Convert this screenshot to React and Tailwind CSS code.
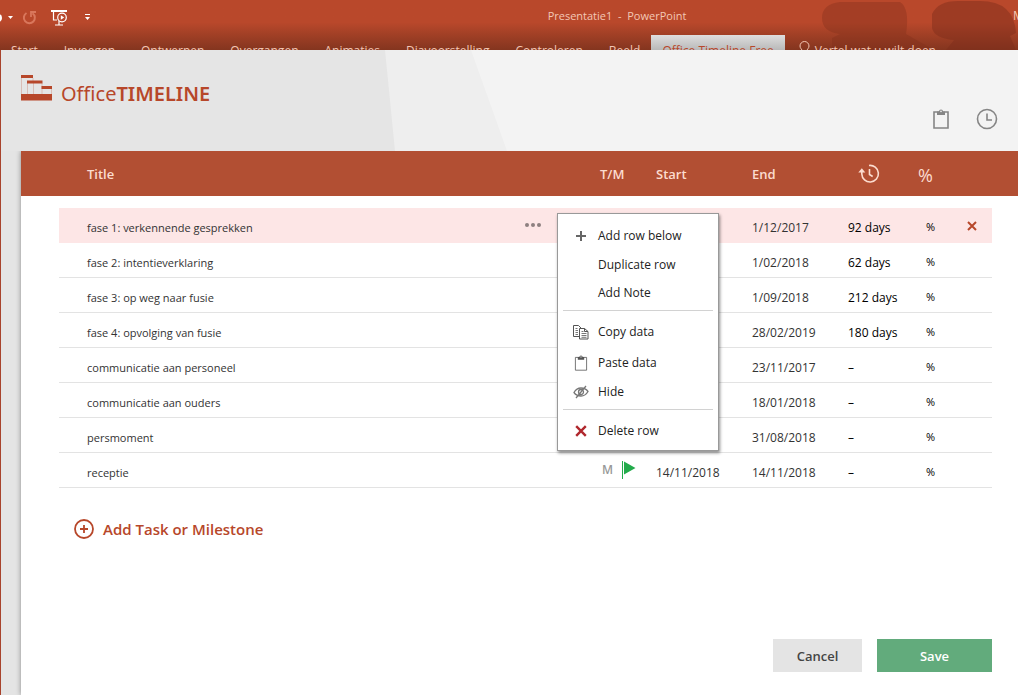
import { useState } from "react";
import clsx from "clsx";

const tabs = ["Start", "Invoegen", "Ontwerpen", "Overgangen", "Animaties", "Diavoorstelling", "Controleren", "Beeld"];

const rows = [
  { title: "fase 1: verkennende gesprekken", end: "1/12/2017", duration: "92 days" },
  { title: "fase 2: intentieverklaring", end: "1/02/2018", duration: "62 days" },
  { title: "fase 3: op weg naar fusie", end: "1/09/2018", duration: "212 days" },
  { title: "fase 4: opvolging van fusie", end: "28/02/2019", duration: "180 days" },
  { title: "communicatie aan personeel", end: "23/11/2017" },
  { title: "communicatie aan ouders", end: "18/01/2018" },
  { title: "persmoment", end: "31/08/2018" },
  { title: "receptie", milestone: true, start: "14/11/2018", end: "14/11/2018" },
];

const ClipboardIcon = ({ className, strokeWidth = 1 }) => (
  <svg viewBox="0 0 16 20" className={className} fill="none" stroke="currentColor" strokeWidth={strokeWidth}>
    <path d="M1 3h14v16H1z" />
    <path d="M4 2.5h2a2 2 0 0 1 4 0h2V6H4z" fill="currentColor" stroke="none" />
    <circle cx="8" cy="2.4" r="0.8" fill="#f3f3f3" stroke="none" />
  </svg>
);

const ClockIcon = () => (
  <svg viewBox="0 0 22 22" className="size-[22px]" fill="none" stroke="currentColor" strokeWidth="1.6">
    <circle cx="11" cy="11" r="9.5" />
    <path d="M11 5.5V12h5" />
  </svg>
);

const HistoryIcon = () => (
  <svg viewBox="0 0 22 20" className="h-5 w-[22px]" fill="none" stroke="currentColor" strokeWidth="1.6">
    <path d="M11 1.5a8.3 8.3 0 1 1-7.2 8.5V7" />
    <path d="M.3 8.5 3.8 4.3l3.5 4.2z" fill="currentColor" stroke="none" />
    <path d="M11.5 5v5.5l3.2 2" />
  </svg>
);

const CopyIcon = () => (
  <svg viewBox="0 0 16 15" className="h-[15px] w-4" fill="none" stroke="currentColor">
    <path d="M6 11.5H.5V.5h5L8 3v1" />
    <path d="M2.5 3.5h2M2.5 5.5H5M2.5 7.5H5M2.5 9.5H5" strokeWidth=".8" />
    <path d="M6.5 3.5h5l3.5 3V14H6.5zM11.5 3.5v3H15" />
    <path d="M8.5 6.5h2M8.5 8.5h5M8.5 10.5h5M8.5 12.3h5" strokeWidth=".8" />
  </svg>
);

const HiddenIcon = () => (
  <svg viewBox="0 0 16 14" className="h-[14px] w-4" fill="none" stroke="#777" strokeWidth="1.3">
    <path d="M1 7.5C3 4 6 3 8 3s5 .8 7 3.5C13 10 10 11 8 11S3 10.3 1 7.5z" />
    <path d="M5.5 7a2.5 2.5 0 1 0 5 0 2.500 2.500 0 1 0-5 0M3 13 13 1" />
  </svg>
);

const CrossIcon = ({ className }) => (
  <svg viewBox="0 0 12 12" className={className} fill="none" stroke="currentColor" strokeWidth="2.4">
    <path d="m1.200 1.200 9.600 9.600M10.800 1.200 1.200 10.800" />
  </svg>
);

const PlusIcon = () => (
  <svg viewBox="0 0 12 12" className="size-3" fill="none" stroke="#666" strokeWidth="2">
    <path d="M6 1v10M1 6h10" />
  </svg>
);

const FlagIcon = () => (
  <svg viewBox="0 0 14 18" className="h-[18px] w-[14px]" fill="#22ab4b">
    <path d="M0 0h1v18H0zM2 .5 13.5 7 2 13.5z" />
  </svg>
);

const Logo = () => (
  <div className="flex items-start text-[#b7472a]">
    <svg viewBox="0 0 31 28" className="mr-[9px] h-7 w-[31px]" fill="currentColor">
      <path d="M0 1h12v3H0zM6 6.5h15.5v3H6zM20.5 12H31v3H20.5zM0 20h31v6.5H0z" />
      <path d="M0 4h1v16H0zM6 9h1v11H6zM11.5 4h1v3h-1zM12 9h1v11h-1zM20.5 9h1v11h-1zM30 14h1v6h-1z" opacity=".25" />
    </svg>
    <span className="pt-[6px] font-['Noto_Sans'] text-xl leading-7">
      Office<span className="font-semibold">TIMELINE</span>
    </span>
  </div>
);

function Ribbon() {
  return (
    <div className="relative h-[50px] shrink-0 overflow-hidden bg-linear-to-b from-[#b9482b] from-45% to-[#84351f] text-xs text-[#f3c7b5]">
      <svg className="absolute top-0 right-0 h-[50px] w-[200px]" viewBox="0 0 200 50" fill="#7d2d1a">
        <path d="M22 2h60q10 6 6 32l28 16H14V38l8-4Q4 32 4 18T22 2z" opacity=".35" />
        <path d="M114 14Q120 1 140 1h22q34 0 36 32l-6 3 6 14h-70l8-10q-20-2-22-12z" opacity=".45" />
      </svg>
      <div className="relative flex h-[35px] items-center">
        <button className="flex w-[22px] items-center" aria-label="Ongedaan maken">
          <svg viewBox="0 0 14 10" className="h-[10px] w-[14px]" fill="#fff">
            <circle cx="-2" cy="5" r="4" />
            <path d="M8 3h5l-2.5 3z" />
          </svg>
        </button>
        <button className="text-[#d9775c]" aria-label="Opnieuw">
          <svg viewBox="0 0 15 15" className="size-[15px]" fill="none" stroke="currentColor" strokeWidth="2">
            <path d="M4.500 3A5.500 5.500 0 1 0 10.500 3.200" />
            <path d="M14 2H9v5" strokeWidth="1.8" />
          </svg>
        </button>
        <button className="ml-[14px] text-white" aria-label="Voorstelling starten">
          <svg viewBox="0 0 17 16" className="h-4 w-[17px]" fill="none" stroke="currentColor" strokeWidth="1.2">
            <path d="M0 1h16" strokeWidth="2" />
            <path d="M2.5 1v9H6M8 11v4M4 15h8" />
            <circle cx="11" cy="7.5" r="4.3" />
            <path d="m9.800 5.300 3.400 2.200-3.400 2.200z" fill="currentColor" stroke="none" />
          </svg>
        </button>
        <button className="ml-4 text-white" aria-label="Werkbalk aanpassen">
          <svg viewBox="0 0 7 7" className="size-[7px]" fill="currentColor">
            <path d="M1 0h5v1H1zM1 3h5L3.500 6z" />
          </svg>
        </button>
        <span className="flex-1 pb-[3px] pl-[130px] text-center text-[11px] whitespace-pre">Presentatie1  -  PowerPoint</span>
        <span className="w-[5px] overflow-hidden pb-[3px]">M</span>
      </div>
      <div className="relative flex h-7 pl-[11px] whitespace-nowrap">
        {tabs.map((tab) => (
          <button key={tab} className="mr-[26px] leading-8">
            {tab}
          </button>
        ))}
        <button className="-ml-[15px] bg-linear-to-b from-[#dedede] to-[#9a9a9a] px-[11px] leading-8 text-[#b7472a]">
          Office Timeline Free
        </button>
        <button className="ml-[14px] flex gap-[5px] leading-8">
          <svg viewBox="0 0 11 16" className="mt-[6px] h-4 w-[11px]" fill="none" stroke="currentColor">
            <path d="M3.5 10.5C3 8 1 7.500 1 5a4.500 4.500 0 0 1 9 0c0 2.500-2 3-2.500 5.500z" />
          </svg>
          Vertel wat u wilt doen
        </button>
      </div>
    </div>
  );
}

const MenuItem = ({ icon, label, className }) => (
  <button role="menuitem" className={clsx("flex w-full items-center text-left text-xs text-[#222]", className)}>
    <span className="mr-2 ml-[14px] flex w-[18px] justify-center text-[#555]">{icon}</span>
    {label}
  </button>
);

const RowMenu = () => (
  <div
    role="menu"
    className="absolute top-[5px] left-full z-10 -ml-[15px] w-[162px] border border-[#999] bg-white pt-2 pb-[5px] shadow-[1px_2px_3px_rgba(0,0,0,0.45)]"
  >
    <MenuItem className="h-7" icon={<PlusIcon />} label="Add row below" />
    <MenuItem className="h-[29px]" label="Duplicate row" />
    <MenuItem className="h-7" label="Add Note" />
    <hr className="mx-[5px] mt-[3px] mb-[6px] border-[#d2d2d2]" />
    <MenuItem className="h-[30px]" icon={<CopyIcon />} label="Copy data" />
    <MenuItem className="h-8" icon={<ClipboardIcon className="h-4 w-[14px]" />} label="Paste data" />
    <MenuItem className="h-[26px]" icon={<HiddenIcon />} label="Hide" />
    <hr className="mx-[5px] mt-1 mb-[7px] border-[#d2d2d2]" />
    <MenuItem className="h-7" icon={<CrossIcon className="size-3 text-[#b0272d]" />} label="Delete row" />
  </div>
);

export default function App() {
  const [activeRow, setActiveRow] = useState(0);

  return (
    <div className="flex min-h-screen flex-col overflow-hidden bg-[#e4e4e4] font-['Open_Sans',sans-serif]">
      <Ribbon />

      <div className="flex flex-1 flex-col border-l border-[#a8432c]">
        <header className="relative flex h-[101px] shrink-0 justify-between bg-[#f3f3f3] pt-6 pr-5 pl-5">
          <svg className="absolute top-0 left-0 h-full w-[506px]" viewBox="0 0 506 101">
            <path d="M0 0h470l36 101H0z" fill="#eeeeee" />
            <path d="M0 0h384l10 101H0z" fill="#e5e5e5" />
          </svg>
          <div className="relative">
            <Logo />
          </div>
          <div className="relative flex items-center gap-[27px] pt-3 text-[#858585]">
            <button aria-label="Paste">
              <ClipboardIcon className="h-5 w-4" strokeWidth={1.6} />
            </button>
            <button aria-label="History">
              <ClockIcon />
            </button>
          </div>
        </header>

        <main className="ml-5 flex flex-1 flex-col bg-white shadow-[0_0_5px_rgba(0,0,0,0.4)]">
          <table className="w-full table-fixed border-separate border-spacing-0 text-xs text-[#333]">
            <colgroup>
              <col className="w-[38px]" />
              <col />
              <col className="w-[56px]" />
              <col className="w-24" />
              <col className="w-24" />
              <col className="w-[58px]" />
              <col className="w-[46px]" />
              <col className="w-10" />
              <col className="w-[26px]" />
            </colgroup>
            <thead>
              <tr className="h-[45px] bg-[#b24f33] text-left text-[13px] text-[#fcdccf] *:font-semibold">
                <td />
                <th className="pt-[2px] pl-7">Title</th>
                <th className="pt-[2px]">T/M</th>
                <th className="pt-[2px]">Start</th>
                <th className="pt-[2px]">End</th>
                <th className="pl-[10px]" aria-label="Duration">
                  <HistoryIcon />
                </th>
                <th className="pt-[2px] pl-3 text-lg">
                  <span className="font-normal">%</span>
                </th>
                <td />
                <td />
              </tr>
            </thead>
            <tbody className="before:block before:h-3">
              {rows.map((row, i) => {
                const active = i === activeRow;
                return (
                  <tr
                    key={row.title}
                    onClick={() => setActiveRow(i)}
                    className={clsx(
                      "h-[35px] [&>.cell]:border-b [&>.cell]:pt-[5px]",
                      active ? "[&>.cell]:border-[#fde6e6] [&>.cell]:bg-[#fde6e6]" : "[&>.cell]:border-[#e3e3e3]"
                    )}
                  >
                    <td />
                    <td className="cell relative pl-7">
                      <div className="flex items-center justify-between pt-px pr-[59px] text-[11px]">
                        {row.title}
                        {active && (
                          <button className="flex gap-[2px] pb-[6px]" aria-label="Row menu">
                            <span className="size-1 rounded-full bg-[#8d8080]" />
                            <span className="size-1 rounded-full bg-[#8d8080]" />
                            <span className="size-1 rounded-full bg-[#8d8080]" />
                          </button>
                        )}
                      </div>
                      {active && (
                        <div className="absolute top-0 right-[28px]">
                          <RowMenu />
                        </div>
                      )}
                    </td>
                    <td className="cell">
                      {row.milestone && (
                        <div className="flex items-center gap-[9px] pb-[6px] pl-[2px] font-semibold text-[#999]">
                          M <FlagIcon />
                        </div>
                      )}
                    </td>
                    <td className="cell">{row.start}</td>
                    <td className="cell">{row.end}</td>
                    <td className="cell whitespace-nowrap text-black">{row.duration || "–"}</td>
                    <td className="cell pl-5 text-[11px] text-black">%</td>
                    <td className="cell">
                      {active && (
                        <button className="mx-auto block pb-1 text-[#b7472a]" aria-label="Delete row">
                          <CrossIcon className="size-[10px]" />
                        </button>
                      )}
                    </td>
                    <td />
                  </tr>
                );
              })}
            </tbody>
          </table>

          <button className="mt-[30px] ml-[53px] flex items-center gap-[9px] self-start text-[15px] font-semibold text-[#b7472a]">
            <svg viewBox="0 0 20 20" className="size-5" fill="none" stroke="currentColor" strokeWidth="1.8">
              <circle cx="10" cy="10" r="9" />
              <path d="M10 6v8M6 10h8" />
            </svg>
            Add Task or Milestone
          </button>

          <footer className="mt-auto flex justify-end gap-[15px] pr-[26px] pb-[23px] text-[13px] font-semibold">
            <button className="h-[33px] w-[89px] bg-[#e4e4e4] pt-[2px] text-[#444]">Cancel</button>
            <button className="h-[33px] w-[115px] bg-[#62ab7c] pt-[2px] text-white">Save</button>
          </footer>
        </main>
      </div>
    </div>
  );
}
